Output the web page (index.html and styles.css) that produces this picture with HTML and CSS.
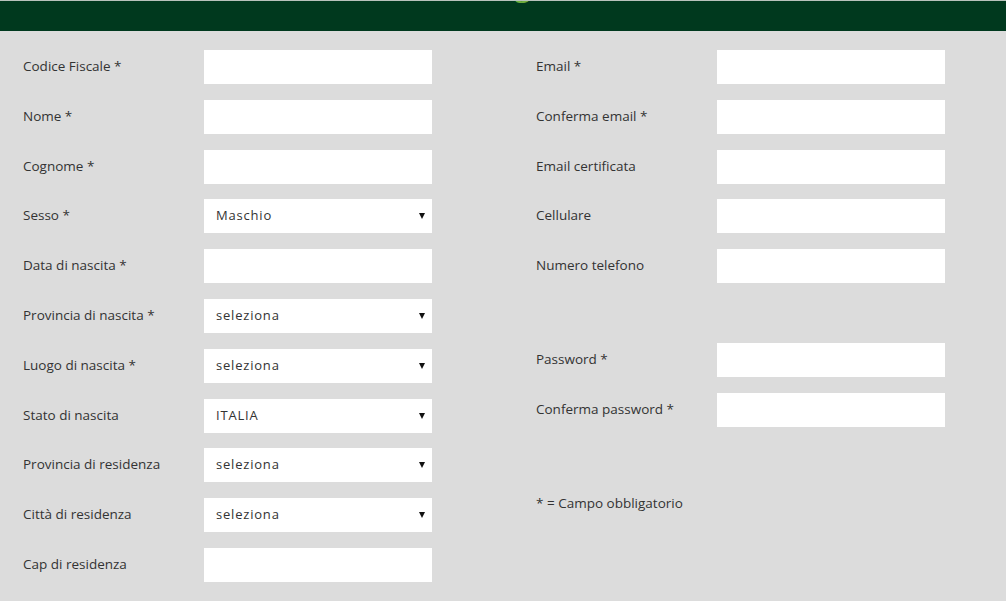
FILE: index.html
```html
<!DOCTYPE html>
<html lang="it">
<head>
<meta charset="utf-8">
<title>Registrazione</title>
<link rel="stylesheet" href="styles.css">
</head>
<body>
<header class="topbar">
  <h1 class="title">Registrazione</h1>
</header>
<form class="form">
  <div class="col">
    <div class="row"><label class="lbl">Codice Fiscale *</label><input class="field" type="text"></div>
    <div class="row"><label class="lbl">Nome *</label><input class="field" type="text"></div>
    <div class="row"><label class="lbl">Cognome *</label><input class="field" type="text"></div>
    <div class="row"><label class="lbl">Sesso *</label><div class="sel"><select class="field"><option>Maschio</option><option>Femmina</option></select></div></div>
    <div class="row"><label class="lbl">Data di nascita *</label><input class="field" type="text"></div>
    <div class="row"><label class="lbl">Provincia di nascita *</label><div class="sel"><select class="field"><option>seleziona</option></select></div></div>
    <div class="row"><label class="lbl">Luogo di nascita *</label><div class="sel"><select class="field"><option>seleziona</option></select></div></div>
    <div class="row"><label class="lbl">Stato di nascita</label><div class="sel"><select class="field"><option>ITALIA</option></select></div></div>
    <div class="row"><label class="lbl">Provincia di residenza</label><div class="sel"><select class="field"><option>seleziona</option></select></div></div>
    <div class="row"><label class="lbl">Città di residenza</label><div class="sel"><select class="field"><option>seleziona</option></select></div></div>
    <div class="row"><label class="lbl">Cap di residenza</label><input class="field" type="text"></div>
  </div>
  <div class="col">
    <div class="row"><label class="lbl">Email *</label><input class="field" type="text"></div>
    <div class="row"><label class="lbl">Conferma email *</label><input class="field" type="text"></div>
    <div class="row"><label class="lbl">Email certificata</label><input class="field" type="text"></div>
    <div class="row"><label class="lbl">Cellulare</label><input class="field" type="text"></div>
    <div class="row"><label class="lbl">Numero telefono</label><input class="field" type="text"></div>
    <div class="spacer"></div>
    <div class="row"><label class="lbl">Password *</label><input class="field" type="password"></div>
    <div class="row"><label class="lbl">Conferma password *</label><input class="field" type="password"></div>
    <div class="spacer"></div>
    <div class="row"><span class="lbl note">* = Campo obbligatorio</span></div>
  </div>
</form>
</body>
</html>
```
FILE: styles.css
```css
html, body {
  margin: 0;
  padding: 0;
}
body {
  background: #dcdcdc;
  font-family: "Open Sans", "Liberation Sans", sans-serif;
  font-size: 13px;
  color: #333;
  height: 601px;
  overflow: hidden;
}
.topbar {
  height: 30px;
  background: #00391e;
  border-top: 1px solid #b9c3bc;
  overflow: hidden;
}
.title {
  margin: -34px 0 0 0;
  padding-left: 479px;
  font-size: 30px;
  font-weight: 400;
  line-height: 36px;
  color: #6fae3e;
  white-space: nowrap;
}
.form {
  display: grid;
  grid-template-columns: 513px 1fr;
  padding: 19px 0 0 23px;
}
.col {
  display: flex;
  flex-direction: column;
}
.row {
  display: flex;
  align-items: center;
  height: 34px;
  margin-bottom: 15.8px;
}
.lbl {
  width: 181px;
  flex: none;
  font-size: 13.5px;
  padding-bottom: 2px;
  white-space: nowrap;
}
.field {
  box-sizing: border-box;
  width: 228px;
  height: 34px;
  border: 0;
  margin: 0;
  background: #fff;
  font-family: "Open Sans", "Liberation Sans", sans-serif;
  font-size: 13px;
  color: #333;
  outline: none;
  padding: 0 12px;
}
.sel {
  position: relative;
  width: 228px;
  height: 34px;
}
.sel select {
  -webkit-appearance: none;
  appearance: none;
  letter-spacing: 0.8px;
  padding-bottom: 2px;
  border-radius: 0;
}
.sel::after {
  content: "";
  position: absolute;
  right: 7px;
  top: 14px;
  border-left: 3px solid transparent;
  border-right: 3px solid transparent;
  border-top: 6px solid #111;
  pointer-events: none;
}
.spacer {
  height: 44px;
  flex: none;
}
.note {
  width: auto;
}
```
